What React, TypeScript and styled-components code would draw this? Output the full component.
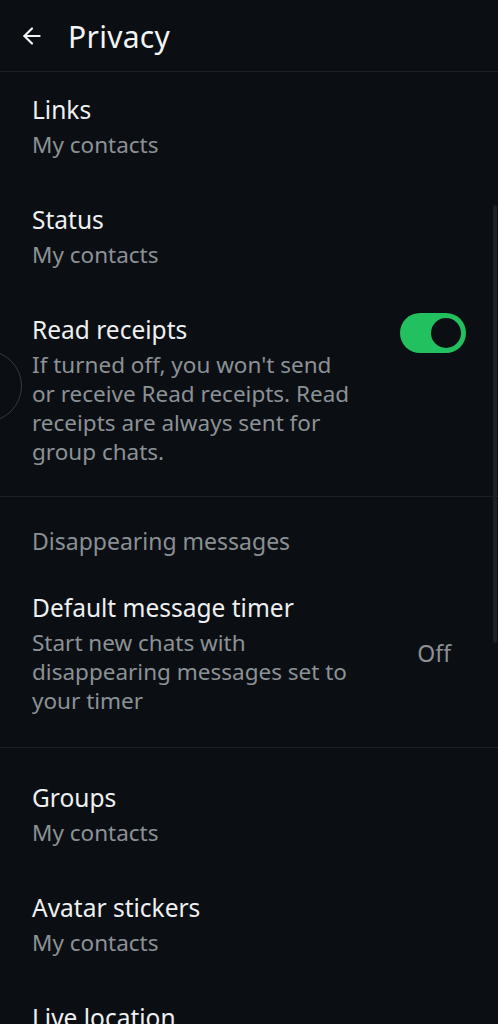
import styled, { createGlobalStyle } from "styled-components";
import { ArrowLeft } from "lucide-react";

const GlobalStyle = createGlobalStyle`
  html, body {
    margin: 0;
    padding: 0;
    background: #0b0f13;
  }
  body {
    font-family: "Noto Sans", "Open Sans", sans-serif;
  }
`;

const Page = styled.div`
  position: relative;
  width: 498px;
  height: 1024px;
  overflow: hidden;
  background: #0b0f13;
  color: #eceff1;
`;

const Header = styled.div`
  display: flex;
  align-items: center;
  height: 72px;
  padding-left: 19px;
  border-bottom: 1px solid #1a1f23;
  box-sizing: border-box;
`;

const Title = styled.h1`
  margin: 2px 0 0 23px;
  font-size: 30px;
  font-weight: 400;
  color: #f2f4f5;
  letter-spacing: 0.3px;
`;

const Group = styled.div<{ $top: number; $bottom: number; $line?: boolean }>`
  padding-top: ${(p) => p.$top}px;
  padding-bottom: ${(p) => p.$bottom}px;
  border-bottom: ${(p) => (p.$line ? "1px solid #1a1f23" : "none")};
`;

const SectionLabel = styled.div`
  padding: 0 32px;
  margin-bottom: 14px;
  font-size: 23px;
  line-height: 29px;
  color: #8a8f94;
`;

const Item = styled.div`
  display: flex;
  align-items: center;
  padding: 21px 32px 23px 32px;
`;

const Texts = styled.div`
  flex: 1;
`;

const ItemTitle = styled.div`
  font-size: 24.5px;
  line-height: 34px;
  color: #eef0f2;
`;

const Sub = styled.div`
  margin-top: 3px;
  font-size: 22.5px;
  line-height: 29px;
  color: #8c9196;
`;

const Value = styled.div`
  margin-right: 15px;
  font-size: 23px;
  color: #8c9196;
`;

const Toggle = styled.div<{ $on: boolean }>`
  display: flex;
  align-items: center;
  justify-content: ${(p) => (p.$on ? "flex-end" : "flex-start")};
  align-self: flex-start;
  width: 66px;
  height: 40px;
  padding: 0 5px;
  box-sizing: border-box;
  border-radius: 20px;
  background: #22c05e;
`;

const Knob = styled.div`
  width: 30px;
  height: 30px;
  border-radius: 50%;
  background: #0b0f13;
`;

const Scrollbar = styled.div`
  position: absolute;
  right: 1px;
  top: 205px;
  width: 4px;
  height: 438px;
  border-radius: 2px;
  background: #1d2125;
`;

const FloatingRing = styled.div`
  position: absolute;
  left: -50px;
  top: 350px;
  width: 72px;
  height: 72px;
  border-radius: 50%;
  border: 1.5px solid #363a3e;
  box-sizing: border-box;
`;

type Row = { title: string; sub: string };

const top: Row[] = [
  { title: "Links", sub: "My contacts" },
  { title: "Status", sub: "My contacts" },
];

const bottom: Row[] = [
  { title: "Groups", sub: "My contacts" },
  { title: "Avatar stickers", sub: "My contacts" },
  { title: "Live location", sub: "None" },
];

function App() {
  return (
    <Page>
      <GlobalStyle />
      <Header>
        <ArrowLeft size={26} strokeWidth={2} color="#f2f4f5" />
        <Title>Privacy</Title>
      </Header>

      <Group $top={0} $bottom={7} $line>
        {top.map((r) => (
          <Item key={r.title}>
            <Texts>
              <ItemTitle>{r.title}</ItemTitle>
              <Sub>{r.sub}</Sub>
            </Texts>
          </Item>
        ))}
        <Item>
          <Texts>
            <ItemTitle>Read receipts</ItemTitle>
            <Sub>
              If turned off, you won't send
              <br />
              or receive Read receipts. Read
              <br />
              receipts are always sent for
              <br />
              group chats.
            </Sub>
          </Texts>
          <Toggle $on>
            <Knob />
          </Toggle>
        </Item>
      </Group>

      <Group $top={30} $bottom={9} $line>
        <SectionLabel>Disappearing messages</SectionLabel>
        <Item>
          <Texts>
            <ItemTitle>Default message timer</ItemTitle>
            <Sub>
              Start new chats with
              <br />
              disappearing messages set to
              <br />
              your timer
            </Sub>
          </Texts>
          <Value>Off</Value>
        </Item>
      </Group>

      <Group $top={12} $bottom={0}>
        {bottom.map((r) => (
          <Item key={r.title}>
            <Texts>
              <ItemTitle>{r.title}</ItemTitle>
              <Sub>{r.sub}</Sub>
            </Texts>
          </Item>
        ))}
      </Group>

      <Scrollbar />
      <FloatingRing />
    </Page>
  );
}

export default App;
